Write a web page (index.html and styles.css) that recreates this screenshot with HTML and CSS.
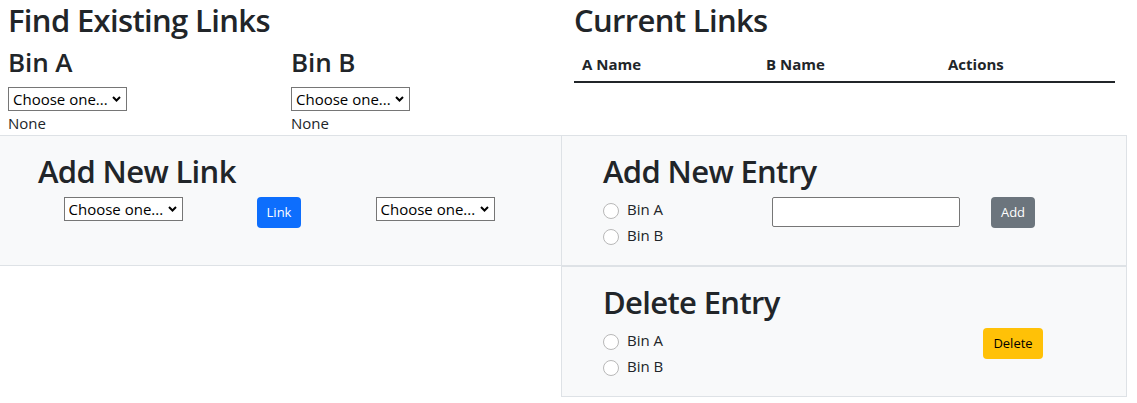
FILE: index.html
```html
<!DOCTYPE html>
<html lang="en">
<head>
<meta charset="utf-8">
<title>Links</title>
<link rel="stylesheet" href="styles.css">
</head>
<body>
<div class="page">
  <div class="top">
    <section class="find">
      <h2 class="title">Find Existing Links</h2>
      <div class="bins">
        <div class="bin">
          <h3 class="bin-title">Bin A</h3>
          <select class="choose"><option>Choose one...</option></select>
          <div class="none">None</div>
        </div>
        <div class="bin">
          <h3 class="bin-title">Bin B</h3>
          <select class="choose"><option>Choose one...</option></select>
          <div class="none">None</div>
        </div>
      </div>
    </section>
    <section class="current">
      <h2 class="title">Current Links</h2>
      <table class="links">
        <colgroup><col class="c1"><col class="c2"><col class="c3"></colgroup>
        <thead><tr><th>A Name</th><th>B Name</th><th>Actions</th></tr></thead>
        <tbody></tbody>
      </table>
    </section>
  </div>
  <div class="bottom">
    <section class="panel link-panel">
      <h2 class="title">Add New Link</h2>
      <div class="link-row">
        <select class="choose"><option>Choose one...</option></select>
        <button class="btn btn-blue">Link</button>
        <select class="choose"><option>Choose one...</option></select>
      </div>
    </section>
    <div class="side">
      <section class="panel box">
        <h2 class="title">Add New Entry</h2>
        <div class="entry-row">
          <div class="radios">
            <label class="check"><span class="radio"></span>Bin A</label>
            <label class="check"><span class="radio"></span>Bin B</label>
          </div>
          <input class="text-input" type="text">
          <div class="act"><button class="btn btn-gray">Add</button></div>
        </div>
      </section>
      <section class="panel box">
        <h2 class="title">Delete Entry</h2>
        <div class="entry-row">
          <div class="radios">
            <label class="check"><span class="radio"></span>Bin A</label>
            <label class="check"><span class="radio"></span>Bin B</label>
          </div>
          <div></div>
          <div class="act"><button class="btn btn-yellow">Delete</button></div>
        </div>
      </section>
    </div>
  </div>
</div>
</body>
</html>
```
FILE: styles.css
```css
* { box-sizing: border-box; }
html, body { margin: 0; padding: 0; background: #fff; }
body {
  font-family: "Open Sans", "Noto Sans", sans-serif;
  font-size: 15px;
  line-height: 1.5;
  color: #212529;
}
.page { width: 1127px; }

.title {
  margin: 0 0 8px;
  font-size: 31px;
  line-height: 38px;
  font-weight: 600;
  letter-spacing: -0.65px;
}

/* top area */
.top {
  display: grid;
  grid-template-columns: 561px 566px;
  height: 135px;
  padding-top: 1px;
}
.find { padding-left: 8px; }
.bins { display: grid; grid-template-columns: 283px 283px; }
.bin-title {
  margin: 0 0 9px;
  font-size: 26px;
  line-height: 31px;
  font-weight: 600;
  letter-spacing: -0.1px;
}
.none { line-height: 22px; margin-top: 1px; }

.choose {
  display: block;
  appearance: none;
  -webkit-appearance: none;
  width: 119px;
  height: 24px;
  margin: 0;
  padding: 0 18px 0 4px;
  border: 1px solid #767676;
  border-radius: 0;
  background: #fff url("data:image/svg+xml,%3Csvg xmlns='http://www.w3.org/2000/svg' width='9' height='6' viewBox='0 0 9 6'%3E%3Cpath d='M1 1l3.5 3.5L8 1' fill='none' stroke='%23000' stroke-width='2'/%3E%3C/svg%3E") no-repeat right 5px center / 9px 6px;
  font-family: inherit;
  font-size: 15px;
  line-height: 22px;
  color: #000;
}

.current { padding: 0 12px 0 13px; }
.current .title { margin-bottom: 7px; }
.links { width: 100%; border-collapse: collapse; }
.links .c1 { width: 184px; }
.links .c2 { width: 182px; }
.links th {
  text-align: left;
  font-weight: 700;
  line-height: 24px;
  padding: 6px 8px 5px;
  border-bottom: 2px solid #212529;
}

/* bottom area */
.bottom { display: grid; grid-template-columns: 561px 566px; }
.panel { background: #f8f9fa; height: 131px; padding-top: 16px; }
.panel .title { margin-bottom: 7px; }
.link-panel {
  border-top: 1px solid #dee2e6;
  border-bottom: 1px solid #dee2e6;
  padding-left: 38px;
}
.link-row {
  display: grid;
  grid-template-columns: repeat(3, 156px);
  justify-items: center;
  align-items: start;
  margin-left: 7px;
}
.box {
  border: 1px solid #dee2e6;
  padding-left: 41px;
}
.entry-row {
  display: grid;
  grid-template-columns: 169px 188px 106px;
  align-items: start;
}
.check {
  display: flex;
  align-items: flex-start;
  height: 24px;
  margin-bottom: 2px;
  line-height: 24px;
}
.radio {
  width: 16px;
  height: 16px;
  margin: 5.5px 8px 0 0;
  border: 1px solid #b8b8b8;
  border-radius: 50%;
  background: #fff;
  flex: none;
}
.text-input {
  width: 188px;
  height: 30px;
  margin: 0;
  border: 1px solid #767676;
  border-radius: 2px;
  background: #fff;
  font: inherit;
}
.act { display: flex; justify-content: center; }

.btn {
  display: inline-flex;
  align-items: center;
  justify-content: center;
  height: 31px;
  padding: 0 9px;
  border: 1px solid transparent;
  border-radius: 4px;
  font-family: inherit;
  font-size: 13px;
  line-height: 1;
}
.btn-blue { background: #0d6efd; color: #fff; }
.btn-gray { background: #6c757d; color: #fff; }
.btn-yellow { background: #ffc107; color: #000; }
```
